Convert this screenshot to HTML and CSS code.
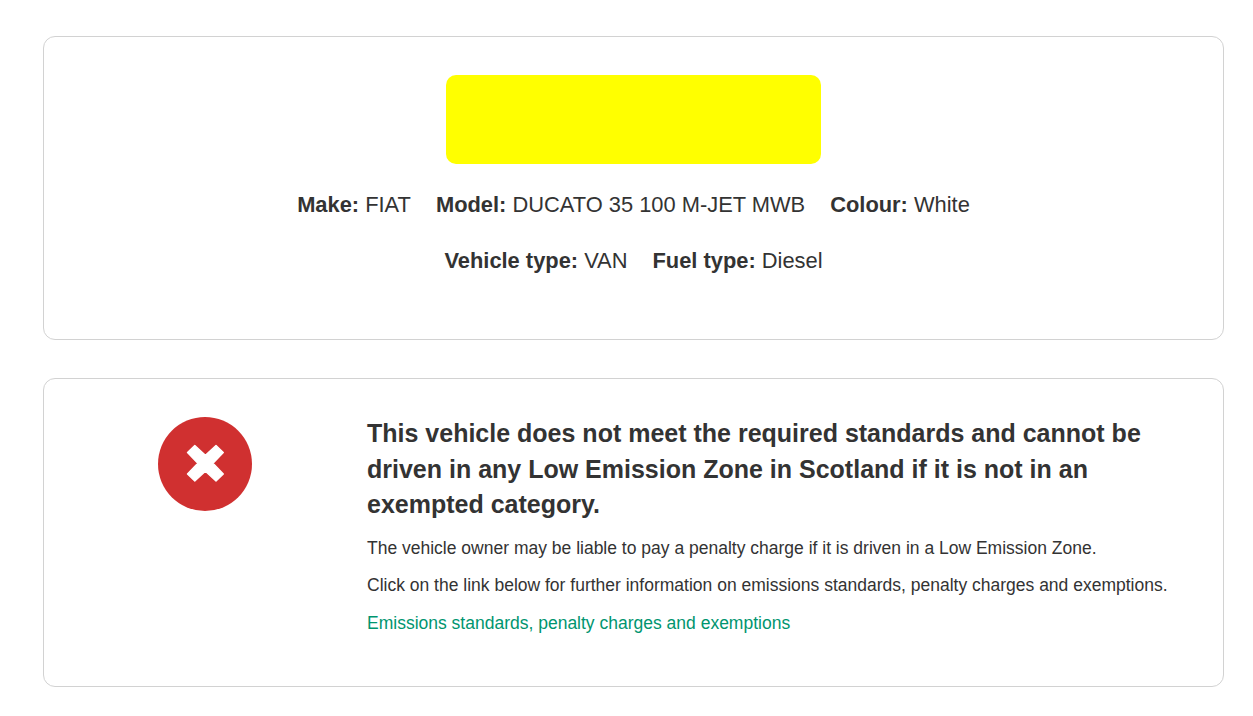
FILE: index.html
```html
<!DOCTYPE html>
<html lang="en">
<head>
    <meta charset="UTF-8">
    <meta name="viewport" content="width=device-width, initial-scale=1.0">
    <title>Low Emission Zone - Vehicle Checker</title>
    <link rel="stylesheet" href="styles.css">
</head>
<body>
    <div class="container">
        <div class="card vehicle">
            <div class="plate"></div>
            <div class="details">
                <span><strong>Make:</strong> FIAT</span>
                <span><strong>Model:</strong> DUCATO 35 100 M-JET MWB</span>
                <span><strong>Colour:</strong> White</span>
            </div>
            <div class="details">
                <span><strong>Vehicle type:</strong> VAN</span>
                <span><strong>Fuel type:</strong> Diesel</span>
            </div>
        </div>

        <div class="card result">
            <div class="result-icon">
                <svg width="94" height="94" viewBox="0 0 94 94">
                    <circle cx="47" cy="47" r="47" fill="#d03030"/>
                    <path d="M36.8 28.5 L47.4 38.2 L58 28.5 L65.3 35.5 L55 46.2 L65.3 56.9 L58 63.9 L47.4 54.2 L36.8 63.9 L29.5 56.9 L39.8 46.2 L29.5 35.5 Z" fill="#fff" stroke="#fff" stroke-width="1.4" stroke-linejoin="round"/>
                </svg>
            </div>
            <div class="result-text">
                <h2>This vehicle does not meet the required standards and cannot be driven in any Low Emission Zone in Scotland if it is not in an exempted category.</h2>
                <p>The vehicle owner may be liable to pay a penalty charge if it is driven in a Low Emission Zone.</p>
                <p>Click on the link below for further information on emissions standards, penalty charges and exemptions.</p>
                <p><a href="#">Emissions standards, penalty charges and exemptions</a></p>
            </div>
        </div>
    </div>
</body>
</html>
```

FILE: styles.css
```css
* {
    box-sizing: border-box;
}
body {
    font-family: "Liberation Sans", Arial, sans-serif;
    margin: 0;
    background-color: #fff;
    color: #333;
}
.container {
    width: 1181px;
    margin: 36px 0 0 43px;
}
.card {
    border: 1px solid #d2d2d2;
    border-radius: 12px;
}
.vehicle {
    height: 304px;
    padding-top: 38px;
    margin-bottom: 38px;
}
.plate {
    width: 375px;
    height: 89px;
    margin: 0 auto 23px;
    background-color: #ff0;
    border-radius: 10px;
}
.details {
    display: flex;
    justify-content: center;
    gap: 25px;
    margin-bottom: 20px;
    font-size: 21.87px;
    line-height: 36px;
    white-space: nowrap;
}
.result {
    display: flex;
    height: 309px;
    padding-top: 38px;
}
.result-icon {
    width: 323px;
    padding-left: 114px;
}
.result-icon svg {
    display: block;
}
.result-text {
    width: 830px;
    white-space: nowrap;
}
.result-text h2 {
    width: 800px;
    margin: -1px 0 11px;
    font-size: 25px;
    line-height: 35.5px;
    white-space: normal;
}
.result-text p {
    margin: 0 0 9.5px;
    font-size: 17.5px;
    line-height: 28px;
}
.result-text a {
    color: #00956f;
    text-decoration: none;
}
```
